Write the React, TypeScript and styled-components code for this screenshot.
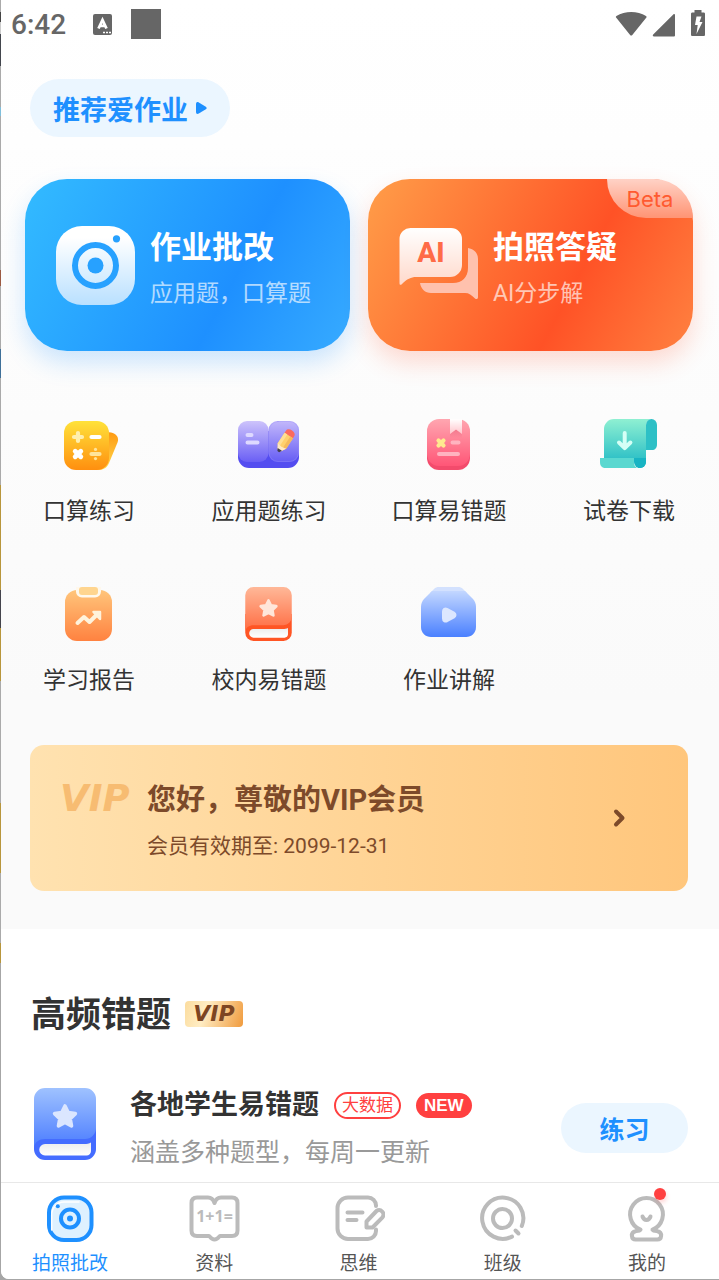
import React from "react";
import styled, { createGlobalStyle } from "styled-components";

const GlobalStyle = createGlobalStyle`
  * { box-sizing: border-box; }
  body {
    margin: 0;
    background: #a6a6a6;
    color: #333;
    font-family: Roboto, "Noto Sans CJK SC", sans-serif;
  }
  button { font: inherit; color: inherit; border: 0; background: none; padding: 0; cursor: pointer; }
  a { color: inherit; text-decoration: none; }
  h2, h3, p { margin: 0; font-weight: 400; }
  svg { display: block; flex: none; }
`;

/* The thin strip left of the app shows the window behind it. */
const Backdrop = styled.div`
  padding: 0 0 1px 1px;
  background: linear-gradient(
    #aaa 12px, #444 12px 22px, #ccc 22px 34px, #43464d 34px 66px, #aaa 66px 107px,
    #7fbfdc 107px 116px, #aaa 116px 270px, #9c5a42 270px 286px, #aaa 286px 349px,
    #3f7099 349px 378px, #aaa 378px 485px, #b8963c 485px 590px, #44444c 590px 628px,
    #b8963c 628px 681px, #aaa 681px 803px, #b8963c 803px 873px, #aaa 873px 943px,
    #b8963c 943px 963px, #a6a6a6 963px
  );
`;

const Page = styled.div`
  min-height: calc(100vh - 1px);
  display: flex;
  flex-direction: column;
  border-bottom-left-radius: 8px;
  background: #fff;
`;

const Hero = styled.section`
  padding-bottom: 38px;
  background: linear-gradient(#ffffff, #fafafa 75%);
`;

const StatusBar = styled.header`
  height: 48px;
  padding: 0 14px 0 10px;
  display: flex;
  align-items: center;
  color: #666;
`;

const Clock = styled.time`
  flex: 0 0 81px;
  padding-top: 2px;
  font-size: 28px;
  line-height: 46px;
  font-weight: 500;
`;

const StatusSquare = styled.span`
  width: 30px;
  height: 30px;
  margin: 0 auto 0 19px;
  background: #666;
`;

const RecommendButton = styled.button`
  display: flex;
  align-items: center;
  gap: 7px;
  height: 58px;
  margin: 31px 0 42px 29px;
  padding: 0 23px;
  border-radius: 29px;
  background: #ebf6ff;
  color: #1e90ff;
  font-size: 27px;
  font-weight: 700;
`;

const Cards = styled.div`
  display: grid;
  grid-template-columns: 1fr 1fr;
  gap: 18px;
  padding: 0 26px 0 24px;
`;

const ActionCard = styled.button<{ $tone: "blue" | "orange" }>`
  position: relative;
  display: flex;
  align-items: center;
  gap: 15px;
  height: 172px;
  padding-left: 31px;
  border-radius: 42px;
  text-align: left;
  color: #fff;
  background: ${(p) =>
    p.$tone === "blue"
      ? "linear-gradient(118deg, #32b9ff 3%, #1e90ff 63%, #34a8ff 96%)"
      : "linear-gradient(118deg, #ff9a47 3%, #ff5226 63%, #ff7c3d 96%)"};
  box-shadow: 0 12px 24px ${(p) => (p.$tone === "blue" ? "rgba(30,144,255,.22)" : "rgba(255,82,38,.2)")};
`;

const CardCopy = styled.span`
  padding-top: 8px;
`;

const CardTitle = styled.span`
  display: block;
  font-size: 31px;
  line-height: 44px;
  font-weight: 700;
`;

const CardNote = styled.span`
  display: block;
  padding-top: 6px;
  font-size: 23px;
  line-height: 36px;
  opacity: 0.65;
`;

const BetaTag = styled.span`
  position: absolute;
  top: 0;
  right: 0;
  width: 86px;
  height: 39px;
  border-radius: 0 42px 0 42px;
  background: linear-gradient(#ffd2c6, #ff9474);
  color: #ff5a30;
  font: 22px/40px Inter, sans-serif;
  text-align: center;
`;

const Features = styled.nav`
  display: grid;
  grid-template-columns: repeat(4, 1fr);
  row-gap: 56px;
  margin: 64px 0 48px -2px;
`;

const Feature = styled.a`
  display: flex;
  flex-direction: column;
  align-items: center;
  gap: 21px;
  font-size: 23px;
  line-height: 32px;
`;

const VipCard = styled.button`
  display: flex;
  align-items: center;
  width: calc(100% - 60px);
  height: 146px;
  margin-left: 29px;
  padding: 0 62px 0 30px;
  border-radius: 14px;
  background: linear-gradient(90deg, #ffe2b0, #ffc67c);
  color: #7d4a2a;
  text-align: left;
`;

const VipMark = styled.span<{ $small?: boolean }>`
  font-family: "DejaVu Sans", sans-serif;
  font-weight: 700;
  font-style: italic;
  font-size: ${(p) => (p.$small ? 22 : 37)}px;
  line-height: ${(p) => (p.$small ? 26 : 40)}px;
  color: ${(p) => (p.$small ? "#7d4522" : "#f7bc72")};
`;

const VipLogo = styled.span`
  flex: 0 0 87px;
  align-self: flex-start;
  padding-top: 34px;
`;

const VipCopy = styled.span`
  flex: 1;
  padding-top: 5px;
`;

const VipTitle = styled.span`
  display: block;
  font-size: 29px;
  line-height: 42px;
  font-weight: 700;
`;

const VipNote = styled.span`
  display: block;
  padding-top: 9px;
  font-size: 21px;
  line-height: 32px;
`;

const Section = styled.section`
  flex: 1;
  padding: 58px 31px 8px 30px;
`;

const SectionHead = styled.div`
  display: flex;
  align-items: center;
  gap: 14px;
`;

const SectionTitle = styled.h2`
  padding-top: 4px;
  font-size: 35px;
  line-height: 50px;
  font-weight: 700;
`;

const VipBadge = styled.span`
  width: 58px;
  height: 26px;
  border-radius: 4px;
  text-align: center;
  line-height: 26px;
  background: linear-gradient(110deg, #fbdc9e, #ffedc4 35%, #f09a3c);
`;

const Item = styled.article`
  display: flex;
  align-items: center;
  padding: 44px 0 0 3px;
`;

const ItemCover = styled.div`
  padding-bottom: 8px;
`;

const ItemCopy = styled.div`
  flex: 1;
  padding-left: 34px;
`;

const ItemTitleRow = styled.div`
  display: flex;
  align-items: center;
  gap: 15px;
`;

const ItemTitle = styled.h3`
  font-size: 27px;
  line-height: 40px;
  font-weight: 700;
`;

const Chip = styled.span<{ $solid?: boolean }>`
  height: ${(p) => (p.$solid ? 25 : 27)}px;
  padding: 0 ${(p) => (p.$solid ? 8 : 6)}px;
  border: ${(p) => (p.$solid ? "0" : "2px solid #ff4040")};
  border-radius: 14px;
  background: ${(p) => (p.$solid ? "#ff4040" : "transparent")};
  color: ${(p) => (p.$solid ? "#fff" : "#ff4040")};
  font-family: ${(p) => (p.$solid ? '"Liberation Sans", sans-serif' : "inherit")};
  font-weight: ${(p) => (p.$solid ? 700 : 400)};
  font-size: 17px;
  line-height: ${(p) => (p.$solid ? 26 : 23)}px;
`;

const ItemNote = styled.p`
  padding-top: 10px;
  font-size: 25px;
  line-height: 36px;
  color: #999;
`;

const PracticeButton = styled.button`
  width: 127px;
  height: 50px;
  border-radius: 25px;
  background: #ebf6ff;
  color: #1e90ff;
  font-size: 25px;
  font-weight: 700;
`;

const TabBar = styled.nav`
  position: sticky;
  bottom: 0;
  height: 97px;
  padding-top: 11px;
  border-top: 1px solid #e8e8e8;
  border-bottom-left-radius: 8px;
  background: #fff;
`;

const TabList = styled.div`
  display: grid;
  grid-template-columns: repeat(5, 1fr);
  margin-left: -3px;
`;

const Tab = styled.button<{ $active?: boolean }>`
  position: relative;
  display: flex;
  flex-direction: column;
  align-items: center;
  gap: 6px;
  font-size: 19px;
  line-height: 28px;
  color: ${(p) => (p.$active ? "#1e90ff" : "#555")};
`;

const UnreadDot = styled.i`
  position: absolute;
  top: -6px;
  left: calc(50% + 7px);
  width: 12px;
  height: 12px;
  border-radius: 50%;
  background: #ff4040;
  box-shadow: 1px 3px 4px rgba(255, 64, 64, 0.2);
`;

type Stops = [string, string];
const Grad = ({ id, c }: { id: string; c: Stops }) => (
  <linearGradient id={id} x1="0" y1="0" x2="0" y2="1">
    <stop stopColor={c[0]} />
    <stop offset="1" stopColor={c[1]} />
  </linearGradient>
);

const FeatureSvg = ({ children }: { children: React.ReactNode }) => (
  <svg width="64" height="60" viewBox="0 0 64 60" fill="none" strokeLinecap="round" strokeLinejoin="round">
    {children}
  </svg>
);

const MathCards = () => (
  <FeatureSvg>
    <defs>
      <Grad id="mc1" c={["#ffe23a", "#ff8f0f"]} />
      <Grad id="mc2" c={["#ff9a12", "#ffd84c"]} />
    </defs>
    <path d="M50 17l4 .5c5 .8 8.500 5 6.500 10L52 48c-2.500 5.500-6 7-12 7z" fill="url(#mc2)" />
    <rect x="7" y="6" width="45" height="49" rx="12" fill="url(#mc1)" />
    <g strokeWidth="4.200">
      <path d="M21 18v8M17 22h8" stroke="#ffefad" />
      <path d="M34.500 22h8" stroke="#fff" />
      <path d="M18.200 36.200l5.600 5.600M23.800 36.200l-5.600 5.600" stroke="#fff" strokeWidth="4.800" />
      <path d="M34.500 39h8" stroke="#ffe49b" />
    </g>
    <circle cx="38.500" cy="34.400" r="1.600" fill="#ffe49b" />
    <circle cx="38.500" cy="43.600" r="1.600" fill="#ffe49b" />
  </FeatureSvg>
);

const OpenBook = () => (
  <FeatureSvg>
    <defs>
      <Grad id="ob1" c={["#cdc3fb", "#6a5ff5"]} />
      <Grad id="ob2" c={["#c3b8fb", "#665df4"]} />
    </defs>
    <path d="M1 16h61v26a11 11 0 0 1-11 11H12A11 11 0 0 1 1 42z" fill="#544df0" />
    <rect x="1" y="6" width="30.500" height="41" rx="9" fill="url(#ob1)" />
    <rect x="31.500" y="6" width="30.500" height="41" rx="9" fill="url(#ob2)" />
    <rect x="32" y="6.500" width="29.500" height="40" rx="9" stroke="#9a91fa" strokeOpacity=".35" />
    <path d="M10.500 20h4M10.500 27.500h10" stroke="#ded9ff" strokeWidth="4" />
    <g transform="translate(48.500 25.500) rotate(33)">
      <path d="M-5-8.500a5 3.500 0 0 1 10 0v4H-5z" fill="#fb6a5e" />
      <path d="M-5-6h10V6.500L1.500 12h-3L-5 6.500z" fill="#ffd06d" />
      <path d="M-5-6h3.200V7.500L-5 6.500z" fill="#ffdf95" />
      <path d="M1.800-6H5V6.500l-3.200 1z" fill="#f5b95c" />
      <path d="M-5 6.500L0 7.500l5-1L2 11.500h-4z" fill="#ffe8c4" />
      <path d="M-2.500 10.500h5L1 13.300h-2z" fill="#423e4e" />
    </g>
  </FeatureSvg>
);

const ErrorBook = () => (
  <FeatureSvg>
    <defs>
      <Grad id="eb1" c={["#ffa6b0", "#ff5677"]} />
      <Grad id="eb2" c={["#ffffff", "#ffc3ca"]} />
      <linearGradient id="eb3" x1="0" y1="0" x2="0" y2="1">
        <stop stopColor="#e8647c" stopOpacity=".6" />
        <stop offset="1" stopColor="#e8647c" stopOpacity="0" />
      </linearGradient>
    </defs>
    <rect x="10" y="10" width="43" height="45" rx="12" fill="#f34b6c" />
    <rect x="10" y="4" width="43" height="47" rx="12" fill="url(#eb1)" />
    <path d="M33 19l6-5 6 5v4H33z" fill="url(#eb3)" />
    <path d="M33 4h12v15l-6-4.500-6 4.500z" fill="url(#eb2)" />
    <path d="M21.500 25.500l5 5m0-5l-5 5" stroke="#ffe98f" strokeWidth="4.200" />
    <path d="M35.500 27.500h6M22 39h19" stroke="#ffb3c0" strokeWidth="4" />
  </FeatureSvg>
);

const PaperScroll = () => (
  <FeatureSvg>
    <defs>
      <Grad id="ps1" c={["#8ff0d2", "#1bb7c4"]} />
    </defs>
    <path d="M55 4H17C11 4 7 9 7 14v32h30l4 7h2a6 6 0 0 0 6-6V11c0-4 2-7 6-7z" fill="url(#ps1)" />
    <path d="M49 10a5.500 6 0 0 1 11 0v19c0 4-2 6-5 6h-6z" fill="#2dc0c6" />
    <path d="M37 43h12v4a6 6 0 0 1-12 0z" fill="#18b4c3" />
    <path d="M3 43h34v4c0 4 2 6 5 6H9c-4 0-6-2-6-6z" fill="#5ad8d0" />
    <path d="M27.700 18v14M22 27.500l5.700 5.700 5.700-5.700" stroke="#d5fff6" strokeWidth="4" />
  </FeatureSvg>
);

const ReportBoard = () => (
  <FeatureSvg>
    <defs>
      <Grad id="rb1" c={["#ffc57b", "#ff8240"]} />
    </defs>
    <rect x="8" y="6" width="47" height="51" rx="12" fill="url(#rb1)" />
    <path d="M19 3h25v4.500a6 6 0 0 1-6 6H25a6 6 0 0 1-6-6z" fill="#fff8ec" />
    <rect x="22" y="3" width="19" height="8" rx="3" fill="#ffd58f" />
    <path d="M20.500 39l6.500-6 5.500 5 7.500-7.500" stroke="#fff3dc" strokeWidth="4" />
    <path d="M36.500 28H43v7z" fill="#fff3dc" stroke="#fff3dc" strokeWidth="2.500" />
  </FeatureSvg>
);

const StarBook = ({ id, face, edge, star, width, height }: {
  id: string; face: Stops; edge: string; star: string; width: number; height: number;
}) => (
  <svg width={width} height={height} viewBox="0 0 62 72" fill="none">
    <defs>
      <Grad id={id} c={face} />
      <Grad id={`${id}p`} c={["#ececec", "#ffffff"]} />
    </defs>
    <path d="M0 36h62v25a11 11 0 0 1-11 11H11A11 11 0 0 1 0 61z" fill={edge} />
    <path d="M11 0h40a11 11 0 0 1 11 11v29a11 11 0 0 1-11 11H11C5 51 1 54 0 59V11A11 11 0 0 1 11 0z" fill={`url(#${id})`} />
    <path d="M11 56h39c3 0 5-.5 7-1.500V63c0 2.500-2 4.500-4.500 4.500H11a5.700 5.700 0 0 1 0-11.500z" fill={`url(#${id}p)`} />
    <path
      d="M31 18l3.200 6.600 7.200 1-5.200 5.100 1.300 7.200-6.500-3.400-6.500 3.400 1.300-7.200-5.200-5.100 7.200-1z"
      fill={star}
      stroke={star}
      strokeWidth="3.600"
      strokeLinejoin="round"
    />
  </svg>
);

const SchoolBook = () => (
  <FeatureSvg>
    <svg x="8" y="3" width="47" height="54">
      <StarBook id="sb1" face={["#ffb898", "#ff6c42"]} edge="#ff5524" star="#ffe6da" width={47} height={54} />
    </svg>
  </FeatureSvg>
);

const VideoBox = () => (
  <FeatureSvg>
    <defs>
      <Grad id="vb1" c={["#c3d7ff", "#4a80ff"]} />
    </defs>
    <path d="M13 9l4-4c1.500-1.400 3-2 5-2h19c2 0 3.500.6 5 2l4 4z" fill="#d3e1fe" />
    <path d="M15 7h33l8 8c2 2 3 5 3 8v20c0 6-4.500 10-10 10H14C8.500 53 4 49 4 43V23c0-3 1-6 3-8z" fill="url(#vb1)" />
    <path d="M26.500 27.500c0-2 1.500-3 3.300-2.200l7 3.700c1.600 1 1.600 3 0 4l-7 3.800c-1.800.8-3.300-.2-3.300-2.200z" fill="#dce7ff" stroke="#dce7ff" strokeWidth="3" />
  </FeatureSvg>
);

const CameraIcon = () => (
  <svg width="79" height="79" viewBox="0 0 79 79" fill="none">
    <defs>
      <linearGradient id="cam" x1="0" y1="0" x2="0" y2="1">
        <stop offset=".15" stopColor="#fff" />
        <stop offset="1" stopColor="#b9e0ff" />
      </linearGradient>
    </defs>
    <rect width="79" height="79" rx="26" fill="url(#cam)" />
    <circle cx="39.500" cy="39.500" r="20.500" stroke="#27a1ff" strokeWidth="6" />
    <circle cx="39.500" cy="39.500" r="8" fill="#27a1ff" />
    <circle cx="60.500" cy="12.800" r="3.600" fill="#27a1ff" />
  </svg>
);

const ChatIcon = () => (
  <svg width="79" height="76" viewBox="0 0 79 76" fill="none">
    <defs>
      <Grad id="chat" c={["#ffffff", "#ffd9cb"]} />
    </defs>
    <path d="M69 21c6 1 10 5 10 11v38c0 2-1.500 2.700-3 1.500C72.500 68 70 66 66 66H32c-6 0-10-4-11-10h33c9 0 15-6 15-15z" fill="#ffc1ad" />
    <path d="M12 1h40a11 11 0 0 1 11 11v26a12 12 0 0 1-12 12H17c-5 0-9 2-14 7-1.500 1.500-2.500 1-2.500-1V12A11 11 0 0 1 12 1z" fill="url(#chat)" />
    <text x="32" y="35" textAnchor="middle" fill="#ff6b47" fontFamily="Roboto, sans-serif" fontWeight="800" fontSize="28">AI</text>
  </svg>
);

const TabSvg = ({ children }: { children: React.ReactNode }) => (
  <svg width="54" height="50" viewBox="0 0 54 50" fill="none" stroke="#bbb" strokeWidth="4" strokeLinecap="round" strokeLinejoin="round">
    {children}
  </svg>
);

const CheckTabIcon = () => (
  <TabSvg>
    <rect x="6" y="3.500" width="42.500" height="42.500" rx="15" stroke="#1e90ff" fill="#def1ff" />
    <path d="M8.700 36V21A12.500 12.500 0 0 1 21 8h15" stroke="#fff" strokeWidth="1.500" />
    <circle cx="27" cy="24.500" r="9" stroke="#1e90ff" />
    <circle cx="27" cy="24.500" r="3" fill="#1e90ff" stroke="none" />
    <circle cx="14.800" cy="12.300" r="2" fill="#1e90ff" stroke="none" />
  </TabSvg>
);

const MaterialsTabIcon = () => (
  <TabSvg>
    <path d="M10 3.500h11c3 0 5 1 6.500 5.500C29 4.500 31 3.500 34 3.500h11c3.500 0 5.500 2 5.500 5.500v27.500c0 3.500-2 5.500-5.500 5.500H33c-1 0-1.600 3.500-5.500 3.500S23 42 22 42H10c-3.500 0-5.500-2-5.500-5.500V9c0-3.500 2-5.500 5.500-5.500z" />
    <text x="27.500" y="28" textAnchor="middle" fill="#bbb" stroke="none" fontFamily="'Noto Sans', sans-serif" fontWeight="700" fontSize="16">1+1=</text>
  </TabSvg>
);

const ThinkingTabIcon = () => (
  <TabSvg>
    <path d="M45 12v-.5a8 8 0 0 0-8-8H17A10.500 10.500 0 0 0 6.500 14v20.500A10.500 10.500 0 0 0 17 45h20a8 8 0 0 0 8-8v-1.500" />
    <path d="M16.500 18.500h15M16.500 26h9" />
    <path d="M35.500 33.500v-6L45.500 17a4.400 4.400 0 0 1 6 6.300L41.500 33.500z" />
  </TabSvg>
);

const ClassTabIcon = () => (
  <TabSvg>
    <path d="M45.800 32A20.600 20.600 0 1 0 36 42.600" />
    <circle cx="26.500" cy="24.500" r="9.500" />
    <path d="M39.500 36.500l3 3" />
  </TabSvg>
);

const MineTabIcon = () => (
  <TabSvg>
    <path d="M20.500 35.700a16.400 16.400 0 1 1 12 0c1 1.300 3 1.300 4.800 1.500 2.500.4 4 2.300 3.800 4.800-.2 2.300-1.500 3.500-3.800 3.500H15.700c-2.300 0-3.600-1.200-3.800-3.500-.2-2.500 1.300-4.400 3.800-4.800 1.800-.2 3.800-.2 4.800-1.500z" />
    <path d="M22.500 22.500c1.500 4.500 6.500 4.500 8 0" />
  </TabSvg>
);

const features = [
  { label: "口算练习", Icon: MathCards },
  { label: "应用题练习", Icon: OpenBook },
  { label: "口算易错题", Icon: ErrorBook },
  { label: "试卷下载", Icon: PaperScroll },
  { label: "学习报告", Icon: ReportBoard },
  { label: "校内易错题", Icon: SchoolBook },
  { label: "作业讲解", Icon: VideoBox },
];

const tabs = [
  { label: "拍照批改", Icon: CheckTabIcon, active: true },
  { label: "资料", Icon: MaterialsTabIcon },
  { label: "思维", Icon: ThinkingTabIcon },
  { label: "班级", Icon: ClassTabIcon },
  { label: "我的", Icon: MineTabIcon, unread: true },
];

export default function App() {
  return (
    <Backdrop>
      <GlobalStyle />
      <Page>
        <Hero>
          <StatusBar>
            <Clock>6:42</Clock>
            <svg width="20" height="21" viewBox="0 0 20 21">
              <rect x="1" width="19" height="21" rx="2" fill="#666" />
              <path d="M6.500 14.500L10.500 6l4 8.500M8 11.800h5" stroke="#fff" strokeWidth="2.800" fill="none" />
              <path d="M11 18.500h2m1 0h2m1 0h2" stroke="#fff" strokeWidth="1.500" />
            </svg>
            <StatusSquare />
            <svg width="91" height="28" viewBox="0 0 91 28" fill="#666">
              <path d="M2.300 7.800a1.200 1.200 0 0 1 .1-1.900C11 .6 23.500.6 32 5.900a1.200 1.200 0 0 1 .2 1.900L18.300 25c-.7.800-1.500.8-2.200 0z" />
              <path d="M61 5v20.500a1 1 0 0 1-1 1H40c-1.200 0-1.700-1-.8-1.900L59.300 4.500c.8-.8 1.700-.6 1.700.5z" />
              <path d="M80.500 0h7v2.500h2c1 0 1.500.5 1.500 1.500v20.500c0 1-.5 1.500-1.500 1.500h-11c-1 0-1.500-.5-1.500-1.500V4c0-1 .5-1.500 1.500-1.500h2z" />
              <path d="M82.500 6.500h5l-2 5.500h3l-6 12 1.200-9H81z" fill="#fff" />
            </svg>
          </StatusBar>

          <RecommendButton>
            推荐爱作业
            <svg width="12" height="14" viewBox="0 0 12 14" fill="#1e90ff">
              <path d="M1 3v8c0 1.800 1.200 2.500 2.800 1.600l7-4.300c1.200-.8 1.200-1.800 0-2.600l-7-4.300C2.200.5 1 1.200 1 3z" />
            </svg>
          </RecommendButton>

          <Cards>
            <ActionCard $tone="blue">
              <CameraIcon />
              <CardCopy>
                <CardTitle>作业批改</CardTitle>
                <CardNote>应用题，口算题</CardNote>
              </CardCopy>
            </ActionCard>
            <ActionCard $tone="orange">
              <ChatIcon />
              <CardCopy>
                <CardTitle>拍照答疑</CardTitle>
                <CardNote>AI分步解</CardNote>
              </CardCopy>
              <BetaTag>Beta</BetaTag>
            </ActionCard>
          </Cards>

          <Features>
            {features.map(({ label, Icon }) => (
              <Feature href="#" key={label}>
                <Icon />
                {label}
              </Feature>
            ))}
          </Features>

          <VipCard>
            <VipLogo>
              <VipMark>VIP</VipMark>
            </VipLogo>
            <VipCopy>
              <VipTitle>您好，尊敬的VIP会员</VipTitle>
              <VipNote>会员有效期至: 2099-12-31</VipNote>
            </VipCopy>
            <svg width="14" height="20" viewBox="0 0 14 20" fill="none" stroke="#7d4a2a" strokeWidth="4" strokeLinecap="round" strokeLinejoin="round">
              <path d="M4 3.500l6.500 6.500L4 16.500" />
            </svg>
          </VipCard>
        </Hero>

        <Section>
          <SectionHead>
            <SectionTitle>高频错题</SectionTitle>
            <VipBadge>
              <VipMark $small>VIP</VipMark>
            </VipBadge>
          </SectionHead>
          <Item>
            <ItemCover>
              <StarBook id="lb1" face={["#9fc2ff", "#4c7dff"]} edge="#446cff" star="#dbe6ff" width={62} height={72} />
            </ItemCover>
            <ItemCopy>
              <ItemTitleRow>
                <ItemTitle>各地学生易错题</ItemTitle>
                <Chip>大数据</Chip>
                <Chip $solid>NEW</Chip>
              </ItemTitleRow>
              <ItemNote>涵盖多种题型，每周一更新</ItemNote>
            </ItemCopy>
            <PracticeButton>练习</PracticeButton>
          </Item>
        </Section>

        <TabBar>
          <TabList>
            {tabs.map(({ label, Icon, active, unread }) => (
              <Tab key={label} $active={active}>
                <Icon />
                {label}
                {unread && <UnreadDot />}
              </Tab>
            ))}
          </TabList>
        </TabBar>
      </Page>
    </Backdrop>
  );
}
